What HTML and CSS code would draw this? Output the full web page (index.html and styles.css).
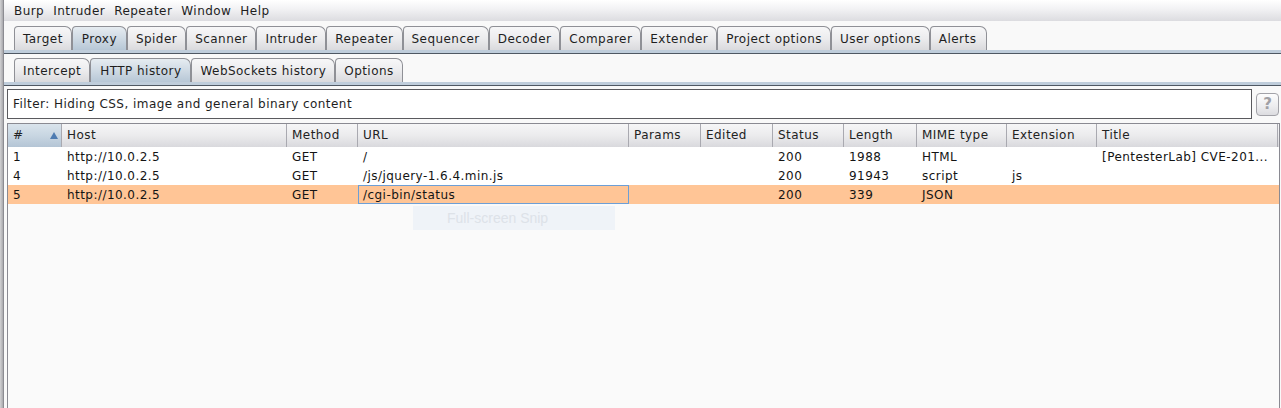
FILE: index.html
```html
<!DOCTYPE html>
<html>
<head>
<meta charset="utf-8">
<title>Burp Suite - Proxy HTTP history</title>
<link rel="stylesheet" href="styles.css">
</head>
<body>
<div class="edge"></div>
<div class="win">
  <div class="menubar">
    <span class="menu">Burp</span>
    <span class="menu">Intruder</span>
    <span class="menu">Repeater</span>
    <span class="menu">Window</span>
    <span class="menu">Help</span>
  </div>

  <div class="tabbar main-tabs">
    <div class="tabs">
      <div class="tab">Target</div>
      <div class="tab sel">Proxy</div>
      <div class="tab">Spider</div>
      <div class="tab">Scanner</div>
      <div class="tab">Intruder</div>
      <div class="tab">Repeater</div>
      <div class="tab">Sequencer</div>
      <div class="tab">Decoder</div>
      <div class="tab">Comparer</div>
      <div class="tab">Extender</div>
      <div class="tab">Project options</div>
      <div class="tab">User options</div>
      <div class="tab alerts">Alerts</div>
    </div>
    <div class="band"></div>
  </div>

  <div class="tabbar sub-tabs">
    <div class="tabs">
      <div class="tab">Intercept</div>
      <div class="tab sel">HTTP history</div>
      <div class="tab">WebSockets history</div>
      <div class="tab">Options</div>
    </div>
    <div class="band"></div>
  </div>

  <div class="filterrow">
    <div class="filter">Filter: Hiding CSS, image and general binary content</div>
    <div class="help">?</div>
  </div>

  <div class="table">
    <div class="thead grid">
      <div class="th sorted"># <span class="sort"></span></div>
      <div class="th">Host</div>
      <div class="th">Method</div>
      <div class="th">URL</div>
      <div class="th">Params</div>
      <div class="th">Edited</div>
      <div class="th">Status</div>
      <div class="th">Length</div>
      <div class="th">MIME type</div>
      <div class="th">Extension</div>
      <div class="th">Title</div>
      <div class="th filler"></div>
    </div>
    <div class="tbody">
      <div class="row grid">
        <div class="td">1</div><div class="td">http://10.0.2.5</div><div class="td">GET</div><div class="td">/</div><div class="td"></div><div class="td"></div><div class="td">200</div><div class="td">1988</div><div class="td">HTML</div><div class="td"></div><div class="td">[PentesterLab] CVE-201...</div><div class="td"></div>
      </div>
      <div class="row grid">
        <div class="td">4</div><div class="td">http://10.0.2.5</div><div class="td">GET</div><div class="td">/js/jquery-1.6.4.min.js</div><div class="td"></div><div class="td"></div><div class="td">200</div><div class="td">91943</div><div class="td">script</div><div class="td">js</div><div class="td"></div><div class="td"></div>
      </div>
      <div class="row grid selected">
        <div class="td">5</div><div class="td">http://10.0.2.5</div><div class="td">GET</div><div class="td focus">/cgi-bin/status</div><div class="td"></div><div class="td"></div><div class="td">200</div><div class="td">339</div><div class="td">JSON</div><div class="td"></div><div class="td"></div><div class="td"></div>
      </div>
    </div>
  </div>
</div>
<div class="snip">Full-screen Snip</div>
</body>
</html>
```

FILE: styles.css
```css
html, body {
  margin: 0;
  padding: 0;
}
body {
  width: 1281px;
  height: 408px;
  overflow: hidden;
  display: flex;
  background: #f9f9f9;
  font-family: "DejaVu Sans", sans-serif;
  font-size: 12px;
  letter-spacing: 0.45px;
  color: #1a1a1a;
  position: relative;
}
.edge {
  width: 3px;
  flex: none;
  background: linear-gradient(to right, #d2d2d4, #a9a9ad);
  border-right: 1px solid #8c8c92;
}
.win {
  flex: 1;
  display: flex;
  flex-direction: column;
  min-width: 0;
}

/* menu */
.menubar {
  height: 21px;
  flex: none;
  display: flex;
  align-items: center;
  gap: 9px;
  padding-left: 10px;
  background: linear-gradient(#ffffff, #f3f3f5 40%, #dcdce0);
  color: #1e1e1e;
}

/* tabs */
.tabbar {
  flex: none;
  display: flex;
  flex-direction: column;
}
.main-tabs { padding-top: 5px; }
.sub-tabs { padding-top: 4px; }
.tabs {
  display: flex;
  padding-left: 10px;
  height: 24px;
}
.tab {
  box-sizing: border-box;
  height: 100%;
  padding: 0 8px;
  display: flex;
  align-items: center;
  border: 1px solid #8f9096;
  border-bottom: none;
  border-radius: 4px 7px 0 0;
  background: linear-gradient(#f7f7f8, #ececee 50%, #dadadd);
  color: #1e1e1e;
  white-space: nowrap;
}
.tab.alerts { padding-right: 10px; }
.tab.sel {
  padding: 0 9px;
  background: linear-gradient(#e6ecf1, #cfdae4 50%, #b7c7d6);
}
.band {
  height: 3px;
  background: #bfcddb;
  border-bottom: 1px solid #4f5863;
}

/* filter */
.filterrow {
  flex: none;
  display: flex;
  align-items: center;
  gap: 4px;
  margin-top: 3px;
  padding: 0 2px 0 3px;
}
.filter {
  flex: 1;
  box-sizing: border-box;
  height: 30px;
  display: flex;
  align-items: center;
  padding-left: 5px;
  background: #ffffff;
  border: 1px solid #5a5a5e;
  color: #1e1e1e;
}
.help {
  box-sizing: border-box;
  width: 23px;
  height: 23px;
  display: flex;
  align-items: center;
  justify-content: center;
  border: 1px solid #a2a2a8;
  border-radius: 4px;
  background: linear-gradient(#fdfdfd, #ececee 60%, #dcdce0);
  color: #a0a0a5;
  font-size: 15px;
  font-weight: bold;
  letter-spacing: 0;
}

/* table */
.table {
  flex: 1;
  margin: 4px 1px 0 3px;
  border: 1px solid #8a8a92;
  border-bottom: none;
  background: #fafafa;
  display: flex;
  flex-direction: column;
}
.grid {
  display: grid;
  grid-template-columns: 54px 225px 71px 271px 72px 72px 71px 73px 90px 90px 181px 1fr;
}
.thead {
  height: 23px;
  background: linear-gradient(#f6f6f7, #ebebed 50%, #d9d9dd);
}
.th {
  box-sizing: border-box;
  display: flex;
  align-items: center;
  padding-left: 5px;
  padding-bottom: 1px;
  border-right: 1px solid #a9a9b0;
  color: #222;
  white-space: nowrap;
  position: relative;
}
.th.filler { border-right: none; }
.th.sorted {
  background: linear-gradient(#dae4ec, #c8d6e2 50%, #b4c5d5);
}
.sort {
  position: absolute;
  left: 42px;
  top: 8px;
  width: 0;
  height: 0;
  border-left: 4px solid transparent;
  border-right: 4px solid transparent;
  border-bottom: 7px solid #4d7bb1;
}
.row {
  height: 19px;
  background: #ffffff;
}
.row.selected { background: #ffc596; }
.td {
  box-sizing: border-box;
  display: flex;
  align-items: center;
  padding-left: 5px;
  white-space: nowrap;
  overflow: hidden;
  color: #141414;
}
.td.focus {
  box-shadow: inset 0 0 0 1px #6d9fd6;
}

/* overlay ghost */
.snip {
  position: absolute;
  left: 413px;
  top: 206px;
  width: 202px;
  height: 24px;
  box-sizing: border-box;
  padding-left: 34px;
  display: flex;
  align-items: center;
  background: #eff3f8;
  color: #dde2e8;
  font-family: "Liberation Sans", sans-serif;
  font-size: 14px;
  letter-spacing: 0;
}
```
